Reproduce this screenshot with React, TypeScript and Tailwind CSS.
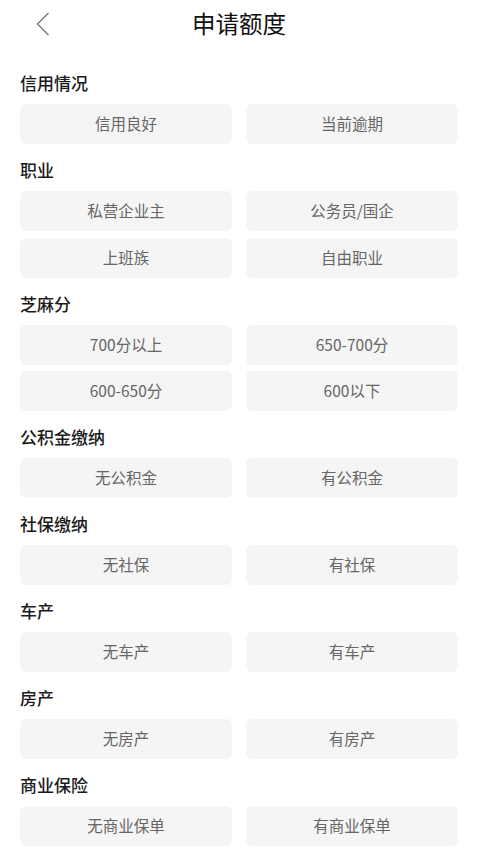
const sections: { title: string; options: string[] }[] = [
  { title: "信用情况", options: ["信用良好", "当前逾期"] },
  { title: "职业", options: ["私营企业主", "公务员/国企", "上班族", "自由职业"] },
  { title: "芝麻分", options: ["700分以上", "650-700分", "600-650分", "600以下"] },
  { title: "公积金缴纳", options: ["无公积金", "有公积金"] },
  { title: "社保缴纳", options: ["无社保", "有社保"] },
  { title: "车产", options: ["无车产", "有车产"] },
  { title: "房产", options: ["无房产", "有房产"] },
  { title: "商业保险", options: ["无商业保单", "有商业保单"] },
];

export default function App() {
  return (
    <div
      className="min-h-[850px] w-[478px] bg-white"
      style={{ fontFamily: '"Noto Sans CJK SC", "Noto Sans", sans-serif' }}
    >
      {/* Nav bar */}
      <div className="relative flex h-[48px] items-center justify-center">
        <button className="absolute left-[30px] top-[8px] flex h-[32px] w-[26px] items-center justify-center">
          <svg width="14" height="24" viewBox="0 0 14 24" fill="none">
            <path d="M12.5 1 L1.5 12 L12.5 23" stroke="#777" strokeWidth="1.4" />
          </svg>
        </button>
        <h1 className="text-[23.5px] leading-none text-[#111]">申请额度</h1>
      </div>

      {/* Form */}
      <div className="px-5 pt-[9px]">
        {sections.map((s) => (
          <div key={s.title}>
            <div className="mt-[14px] mb-[9px] h-6 text-[17px] font-medium leading-6 text-[#1a1a1a]">
              {s.title}
            </div>
            <div className="grid grid-cols-2 gap-x-[14px] gap-y-[6.5px]">
              {s.options.map((o) => (
                <button
                  key={o}
                  className="flex h-10 items-center justify-center rounded-md bg-[#f5f5f5] text-[15.5px] text-[#666]"
                >
                  {o}
                </button>
              ))}
            </div>
          </div>
        ))}
      </div>
    </div>
  );
}
